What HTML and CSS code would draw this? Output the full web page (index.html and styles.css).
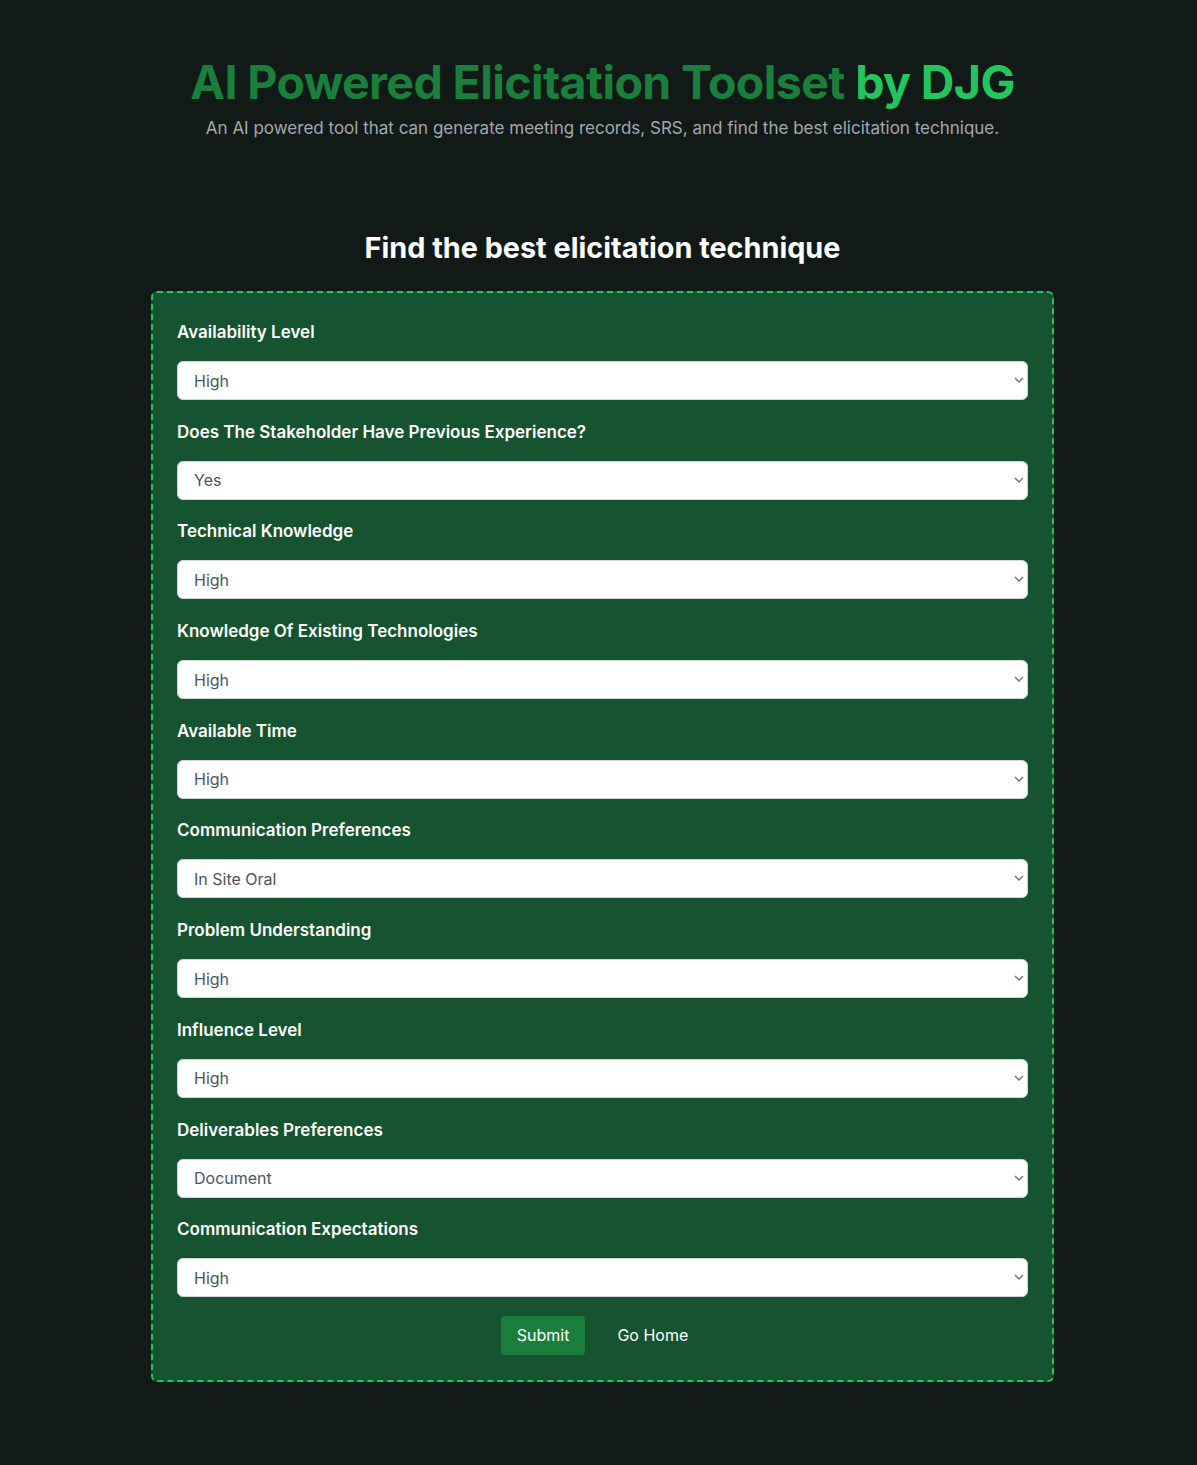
FILE: index.html
```html
<!DOCTYPE html>
<html lang="en">
<head>
<meta charset="utf-8">
<title>AI Powered Elicitation Toolset</title>
<link rel="stylesheet" href="styles.css">
</head>
<body>
<div class="page">
<header class="hero">
  <h1 class="title">AI Powered Elicitation Toolset <span class="accent">by DJG</span></h1>
  <p class="subtitle">An AI powered tool that can generate meeting records, SRS, and find the best elicitation technique.</p>
</header>
<main class="main">
  <h2 class="heading">Find the best elicitation technique</h2>
  <form class="card">
    <div class="field">
      <label class="label">Availability Level</label>
      <div class="select-wrap"><select class="select"><option>High</option><option>Medium</option><option>Low</option></select><svg class="chev" viewBox="0 0 10 6"><path d="M1 1l4 4 4-4"/></svg></div>
    </div>
    <div class="field">
      <label class="label">Does The Stakeholder Have Previous Experience?</label>
      <div class="select-wrap"><select class="select"><option>Yes</option><option>No</option></select><svg class="chev" viewBox="0 0 10 6"><path d="M1 1l4 4 4-4"/></svg></div>
    </div>
    <div class="field">
      <label class="label">Technical Knowledge</label>
      <div class="select-wrap"><select class="select"><option>High</option><option>Medium</option><option>Low</option></select><svg class="chev" viewBox="0 0 10 6"><path d="M1 1l4 4 4-4"/></svg></div>
    </div>
    <div class="field">
      <label class="label">Knowledge Of Existing Technologies</label>
      <div class="select-wrap"><select class="select"><option>High</option><option>Medium</option><option>Low</option></select><svg class="chev" viewBox="0 0 10 6"><path d="M1 1l4 4 4-4"/></svg></div>
    </div>
    <div class="field">
      <label class="label">Available Time</label>
      <div class="select-wrap"><select class="select"><option>High</option><option>Medium</option><option>Low</option></select><svg class="chev" viewBox="0 0 10 6"><path d="M1 1l4 4 4-4"/></svg></div>
    </div>
    <div class="field">
      <label class="label">Communication Preferences</label>
      <div class="select-wrap"><select class="select"><option>In Site Oral</option><option>Remote</option><option>Written</option></select><svg class="chev" viewBox="0 0 10 6"><path d="M1 1l4 4 4-4"/></svg></div>
    </div>
    <div class="field">
      <label class="label">Problem Understanding</label>
      <div class="select-wrap"><select class="select"><option>High</option><option>Medium</option><option>Low</option></select><svg class="chev" viewBox="0 0 10 6"><path d="M1 1l4 4 4-4"/></svg></div>
    </div>
    <div class="field">
      <label class="label">Influence Level</label>
      <div class="select-wrap"><select class="select"><option>High</option><option>Medium</option><option>Low</option></select><svg class="chev" viewBox="0 0 10 6"><path d="M1 1l4 4 4-4"/></svg></div>
    </div>
    <div class="field">
      <label class="label">Deliverables Preferences</label>
      <div class="select-wrap"><select class="select"><option>Document</option><option>Prototype</option></select><svg class="chev" viewBox="0 0 10 6"><path d="M1 1l4 4 4-4"/></svg></div>
    </div>
    <div class="field">
      <label class="label">Communication Expectations</label>
      <div class="select-wrap"><select class="select"><option>High</option><option>Medium</option><option>Low</option></select><svg class="chev" viewBox="0 0 10 6"><path d="M1 1l4 4 4-4"/></svg></div>
    </div>
    <div class="actions">
      <button type="button" class="btn btn-primary">Submit</button>
      <a class="btn btn-link" href="#">Go Home</a>
    </div>
  </form>
</main>
</div>
</body>
</html>
```

FILE: styles.css
```css
* { box-sizing: border-box; }
html, body { margin: 0; padding: 0; }
body {
  background: #121a17;
  font-family: Inter, "Noto Sans", "Liberation Sans", sans-serif;
  color: #fff;
  min-height: 1465px;
}
.page {
  padding-left: 8px;
}
.hero {
  display: flex;
  flex-direction: column;
  align-items: center;
  padding-top: 52px;
}
.title {
  margin: 0;
  font-size: 46.5px;
  line-height: 60px;
  font-weight: 700;
  color: #1a7f3c;
  letter-spacing: -0.6px;
}
.accent { color: #22c55e; }
.subtitle {
  margin: 4px 0 0;
  font-size: 17px;
  line-height: 24px;
  color: #a3a8b0;
}
.main {
  display: flex;
  flex-direction: column;
  align-items: center;
  padding-top: 90px;
}
.heading {
  margin: 0;
  font-size: 28.8px;
  line-height: 36px;
  font-weight: 700;
  color: #fff;
}
.card {
  margin-top: 25px;
  width: 903px;
  background: #165330;
  border: 2px dashed #22c55e;
  border-radius: 6px;
  padding: 27px 24px 25px;
  display: flex;
  flex-direction: column;
  gap: 19.7px;
}
.field {
  display: flex;
  flex-direction: column;
  gap: 17px;
}
.label {
  font-size: 17px;
  line-height: 24px;
  font-weight: 600;
  color: #fff;
}
.select-wrap { position: relative; }
.select {
  appearance: none;
  -webkit-appearance: none;
  width: 100%;
  height: 39px;
  border: 1px solid #d1d5db;
  border-radius: 6px;
  background: #fff;
  padding: 0 16px;
  font-family: inherit;
  font-size: 16px;
  color: #4b5563;
}
.chev {
  position: absolute;
  right: 4px;
  top: 16px;
  width: 10px;
  height: 6px;
  fill: none;
  stroke: #6b7280;
  stroke-width: 1.4;
  pointer-events: none;
}
.actions {
  display: flex;
  justify-content: center;
  gap: 16px;
  margin-top: -1px;
}
.btn {
  height: 39px;
  padding: 0 16px;
  border: none;
  border-radius: 4px;
  font-family: inherit;
  font-size: 16px;
  font-weight: 400;
  display: inline-flex;
  align-items: center;
  text-decoration: none;
  color: #fff;
}
.btn-primary { background: #1a7f3c; }
.btn-link { background: transparent; }
```
